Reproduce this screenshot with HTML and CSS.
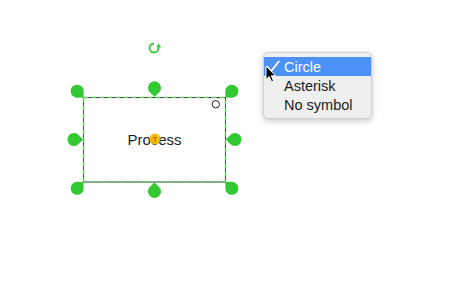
FILE: index.html
```html
<!DOCTYPE html>
<html>
<head>
<meta charset="utf-8">
<link rel="stylesheet" href="styles.css">
</head>
<body>
<div class="canvas">
  <svg class="diagram" width="450" height="290" viewBox="0 0 450 290">
    <defs>
      <path id="drop" d="M0,0 L4.5,-4.3 A6.5,6.5 0 1,0 -4.5,-4.3 Z"/>
    </defs>
    <!-- rotate handle -->
    <g class="rotate">
      <path d="M154,43.5 A4.5,4.5 0 1,0 158.4,47.2" />
      <polygon points="158.8,43.2 156.1,47.3 161.2,47.5" />
    </g>
    <!-- shape -->
    <rect class="box" x="83.5" y="97.5" width="142" height="84.5"/>
    <rect class="sel" x="83.5" y="97.5" width="142" height="84.5"/>
    <circle class="corner-mark" cx="215.8" cy="104.3" r="3.7"/>
    <text class="label" x="154.5" y="144.5">Process</text>
    <circle class="marker" cx="155" cy="139" r="5.5"/>
    <text class="marker-t" x="155" y="141.8">T</text>
    <!-- handles -->
    <g class="handles">
      <use href="#drop" transform="translate(83.5,97.5) rotate(-45)"/>
      <use href="#drop" transform="translate(154.5,96.8) rotate(0)"/>
      <use href="#drop" transform="translate(225.5,97.5) rotate(45)"/>
      <use href="#drop" transform="translate(83,139.5) rotate(-90)"/>
      <use href="#drop" transform="translate(226,139.5) rotate(90)"/>
      <use href="#drop" transform="translate(83.5,182) rotate(-135)"/>
      <use href="#drop" transform="translate(154.5,182.5) rotate(180)"/>
      <use href="#drop" transform="translate(225.5,182) rotate(135)"/>
    </g>
  </svg>

  <div class="menu">
    <div class="menu-item selected">
      <span class="check">
        <svg width="14" height="14" viewBox="0 0 14 14"><path d="M1.5,7 L4.8,11.5 L12.8,1.5"/></svg>
      </span>
      <span>Circle</span>
    </div>
    <div class="menu-item"><span class="check"></span><span>Asterisk</span></div>
    <div class="menu-item"><span class="check"></span><span>No symbol</span></div>
  </div>

  <svg class="cursor" width="12" height="18" viewBox="0 0 12 18">
    <path d="M1,1 L1,14.5 L4.2,11.5 L6.6,16.8 L8.6,15.9 L6.3,10.8 L10.6,10.8 Z"/>
  </svg>
</div>
</body>
</html>
```
FILE: styles.css
```css
html, body {
  margin: 0;
  padding: 0;
  background: #ffffff;
}

.canvas {
  position: relative;
  width: 450px;
  height: 290px;
  overflow: hidden;
  font-family: "Liberation Sans", Arial, sans-serif;
}

.diagram {
  position: absolute;
  left: 0;
  top: 0;
}

.rotate path {
  fill: none;
  stroke: #36c936;
  stroke-width: 1.8;
}

.rotate polygon {
  fill: #36c936;
}

.box {
  fill: #ffffff;
  stroke: #333333;
  stroke-width: 1;
}

.sel {
  fill: none;
  stroke: #5fcd5f;
  stroke-width: 1.6;
  stroke-dasharray: 5 3;
}

.corner-mark {
  fill: #ffffff;
  stroke: #222222;
  stroke-width: 1;
}

.label {
  font-family: "Liberation Sans", Arial, sans-serif;
  font-size: 15px;
  fill: #15222f;
  text-anchor: middle;
}

.marker {
  fill: #f5b700;
  opacity: 0.95;
}

.marker-t {
  font-family: "Liberation Sans", Arial, sans-serif;
  font-size: 8px;
  fill: #8a5f00;
  text-anchor: middle;
}

.handles use {
  fill: #33c933;
}

.menu {
  position: absolute;
  left: 263px;
  top: 52px;
  width: 107px;
  padding: 4px 0 4px 0;
  background: #efefef;
  border: 1px solid #d2d2d2;
  border-radius: 5px;
  box-shadow: 0 2px 6px rgba(0, 0, 0, 0.22);
}

.menu-item {
  display: flex;
  align-items: center;
  height: 19px;
  font-size: 14.5px;
  color: #1a1a1a;
}

.menu-item.selected {
  background: #4b91f7;
  color: #ffffff;
}

.check {
  display: flex;
  align-items: center;
  width: 20px;
  height: 19px;
  padding-left: 2px;
  box-sizing: border-box;
}

.check svg path {
  fill: none;
  stroke: #ffffff;
  stroke-width: 1.9;
  stroke-linecap: round;
  stroke-linejoin: round;
}

.cursor {
  position: absolute;
  left: 265px;
  top: 65px;
}

.cursor path {
  fill: #000000;
  stroke: #ffffff;
  stroke-width: 1;
  stroke-linejoin: round;
}
```
